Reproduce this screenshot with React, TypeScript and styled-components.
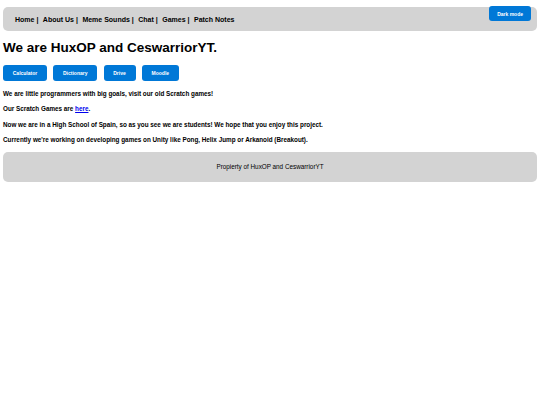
import * as React from 'react';
import styled, { createGlobalStyle } from 'styled-components';

const GlobalStyle = createGlobalStyle`
    html, body {
        margin: 0;
        padding: 0;
        background: #ffffff;
        font-family: "Liberation Sans", Arial, sans-serif;
        color: #000000;
    }
`;

const Page = styled.div`
    position: relative;
    padding: 7px 3px 0;
`;

const NavBar = styled.nav`
    height: 24px;
    background: #d3d3d3;
    border-radius: 5px;
    display: flex;
    align-items: center;
    padding-left: 12px;
`;

const NavLink = styled.a`
    font-size: 7px;
    font-weight: bold;
    color: #000000;
    text-decoration: none;
    margin-right: 4.5px;
    white-space: pre;
    cursor: pointer;
`;

const DarkModeButton = styled.button`
    position: absolute;
    top: 6px;
    right: 9px;
    height: 15px;
    padding: 0 8px;
    border: none;
    border-radius: 3px;
    background: #0078d7;
    color: #ffffff;
    font-family: inherit;
    font-size: 5px;
    font-weight: bold;
    cursor: pointer;
`;

const Title = styled.h1`
    margin: 8.5px 0 0;
    font-size: 13.5px;
    line-height: 15.5px;
    font-weight: bold;
`;

const ButtonRow = styled.div`
    display: flex;
    gap: 6.3px;
    margin-top: 10px;
`;

const LinkButton = styled.button`
    height: 16px;
    padding: 0 9.75px;
    border: none;
    border-radius: 3px;
    background: #0078d7;
    color: #ffffff;
    font-family: inherit;
    font-size: 5px;
    font-weight: bold;
    cursor: pointer;
`;

const Content = styled.section`
    margin-top: 8.5px;
`;

const Text = styled.p`
    margin: 8.1px 0;
    font-size: 6.33px;
    line-height: 7.5px;
    font-weight: bold;

    & a {
        color: #0000ee;
        text-decoration: underline;
    }
`;

const Footer = styled.footer`
    height: 30px;
    background: #d3d3d3;
    border-radius: 5px;
    display: flex;
    align-items: center;
    justify-content: center;
    font-size: 6.33px;
`;

const links = ['Home', 'About Us', 'Meme Sounds', 'Chat', 'Games', 'Patch Notes'];
const tools = ['Calculator', 'Dictionary', 'Drive', 'Moodle'];

const App: React.FC = () => (
    <Page>
        <GlobalStyle />
        <NavBar>
            {links.map((label, i) => (
                <NavLink key={label}>{i < links.length - 1 ? `${label} |` : label}</NavLink>
            ))}
        </NavBar>
        <DarkModeButton>Dark mode</DarkModeButton>
        <Title>We are HuxOP and CeswarriorYT.</Title>
        <ButtonRow>
            {tools.map((t) => (
                <LinkButton key={t}>{t}</LinkButton>
            ))}
        </ButtonRow>
        <Content>
            <Text>We are little programmers with big goals, visit our old Scratch games!</Text>
            <Text>
                Our Scratch Games are <a href="#">here</a>.
            </Text>
            <Text>
                Now we are in a High School of Spain, so as you see we are students! We hope that you
                enjoy this project.
            </Text>
            <Text>
                Currently we're working on developing games on Unity like Pong, Helix Jump or Arkanoid
                (Breakout).
            </Text>
        </Content>
        <Footer>Propierty of HuxOP and CeswarriorYT</Footer>
    </Page>
);

export default App;
